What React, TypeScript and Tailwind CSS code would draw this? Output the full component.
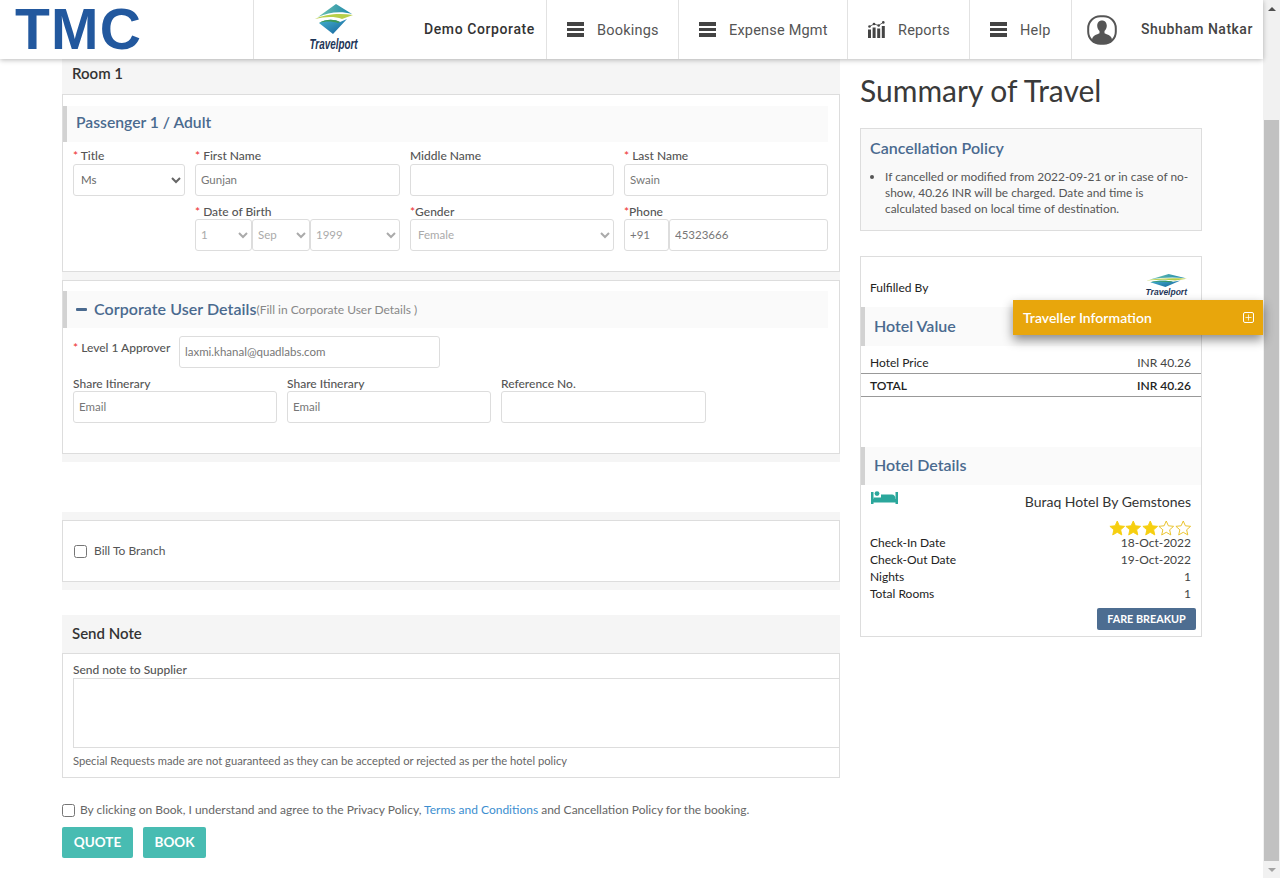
import { Plus } from 'lucide-react';

const labelCls = 'block text-[12px] leading-[14px] text-[#555] font-medium';
const inputCls = 'h-[32px] w-full rounded-[3px] border border-[#ddd] bg-white px-[5px] pb-[0.5px] text-[11.5px] text-[#777] outline-none placeholder:text-[#777]';
const selectCls = 'h-[32px] w-full rounded-[3px] border border-[#ddd] bg-white pb-[1px] text-[11.5px] outline-none';

function Bars() {
  return (
    <span className="flex w-[17px] flex-col gap-[2px]">
      <span className="h-[3.5px] bg-[#444]" />
      <span className="h-[3.5px] bg-[#444]" />
      <span className="h-[3.5px] bg-[#444]" />
    </span>
  );
}

function ChartIcon() {
  return (
    <svg width="17" height="17" viewBox="0 0 17 17" fill="#444">
      <rect x="0" y="8.5" width="3" height="8.5" />
      <rect x="4.6" y="6.5" width="3" height="10.5" />
      <rect x="9.2" y="7.5" width="3" height="9.5" />
      <rect x="13.8" y="5" width="3" height="12" />
      <polyline points="1.5,5.5 6,3 10.7,4.5 15.3,1.2" fill="none" stroke="#444" strokeWidth="0.8" />
      <circle cx="1.5" cy="5.5" r="1.3" />
      <circle cx="6" cy="3" r="1.3" />
      <circle cx="10.7" cy="4.5" r="1.3" />
      <circle cx="15.3" cy="1.4" r="1.3" />
    </svg>
  );
}

function UserIcon() {
  return (
    <svg width="30" height="30" viewBox="0 0 30 30">
      <rect x="1.2" y="1.2" width="27.6" height="27.6" rx="12" fill="#fff" stroke="#555" strokeWidth="2" />
      <path d="M15 5.5c-3 0-4.8 2.2-4.8 5.3 0 2.2 1 4.2 2.3 5.2v2.3c-2.8 1.2-6 2.3-7 4.4-.5 1-.5 2.5-.3 3.5 1.2 1.3 2.6 1.8 4 1.8h11.6c1.4 0 2.8-.5 4-1.8.2-1 .2-2.5-.3-3.5-1-2.1-4.2-3.2-7-4.4V16c1.3-1 2.3-3 2.3-5.2 0-3.1-1.8-5.3-4.8-5.3z" fill="#555" />
    </svg>
  );
}

function TravelportMark({ w, h, id }: { w: number; h: number; id: string }) {
  return (
    <svg width={w} height={h} viewBox="0 0 38 30" preserveAspectRatio="none">
      <defs>
        <linearGradient id={id + 'a'} x1="0" y1="0" x2="1" y2="0">
          <stop offset="0" stopColor="#6fc4ae" />
          <stop offset="1" stopColor="#1b86ad" />
        </linearGradient>
        <linearGradient id={id + 'b'} x1="0" y1="0" x2="1" y2="1">
          <stop offset="0" stopColor="#45b3cf" />
          <stop offset="1" stopColor="#14609a" />
        </linearGradient>
      </defs>
      <path d="M21 0 37 10C26 7 14 8 3 13z" fill={'url(#' + id + 'a)'} />
      <path d="M0 15C10 10 25 9 38 11L27 15C19 12 9 13 0 15z" fill="#b7cf4a" />
      <path d="M4 19C11 15 19 15 25 18L32 15 18 30z" fill={'url(#' + id + 'b)'} />
      <path d="M4 19C11 15 19 15 25 18L23 19C17 17 10 17 4 19z" fill="#3f9a55" />
    </svg>
  );
}

function NavItem({ icon, label, width }: { icon: React.ReactNode; label: string; width: string }) {
  return (
    <div className={`flex h-full items-center gap-[13px] border-l border-[#e2e2e2] pl-[20px] ${width}`}>
      {icon}
      <span className="pt-[2px] font-['Roboto',sans-serif] text-[14.5px] tracking-[0.2px] text-[#555]">{label}</span>
    </div>
  );
}

function Header() {
  return (
    <header className="relative z-10 flex h-[59px] items-center bg-white shadow-[0_1px_5px_rgba(0,0,0,0.28)]">
      <div className="w-[253px] pl-[15px] font-['Liberation_Sans',sans-serif] text-[57px] leading-[57px] font-bold tracking-[1.2px] text-[#22589e]">
        TMC
      </div>
      <div className="flex h-full w-[293px] items-center border-l border-[#e2e2e2]">
        <div className="flex w-[160px] flex-col items-center self-start pt-[4px]">
          <TravelportMark w={38} h={30} id="top" />
          <span className="mt-[1px] font-['Liberation_Sans',sans-serif] text-[15px] leading-[17px] font-bold text-[#1d3557] italic [transform:scaleX(0.66)]">
            Travelport
          </span>
        </div>
        <span className="ml-[10px] font-['Roboto',sans-serif] text-[14px] font-medium tracking-[0.6px] text-[#333]">Demo Corporate</span>
      </div>
      <NavItem icon={<Bars />} label="Bookings" width="w-[132px]" />
      <NavItem icon={<Bars />} label="Expense Mgmt" width="w-[169px]" />
      <NavItem icon={<ChartIcon />} label="Reports" width="w-[122px]" />
      <NavItem icon={<Bars />} label="Help" width="w-[102px]" />
      <div className="flex h-full flex-1 items-center border-l border-[#e2e2e2] pl-[15px]">
        <UserIcon />
        <span className="ml-[24px] font-['Roboto',sans-serif] text-[14px] font-medium tracking-[0.5px] whitespace-nowrap text-[#444]">Shubham Natkar</span>
      </div>
    </header>
  );
}

function Req({ children, cls = '' }: { children: React.ReactNode; cls?: string }) {
  return (
    <label className={`${labelCls} ${cls}`}>
      <span className="text-[#e33]">*</span> {children}
    </label>
  );
}

function SectionBand({ children, cls = 'mr-[11px] h-[36px]' }: { children: React.ReactNode; cls?: string }) {
  return (
    <div className={`flex items-center border-l-[4px] border-[#d2d2d2] bg-[#fafafa] pl-[9px] font-semibold text-[#4a6a8f] ${cls}`}>
      {children}
    </div>
  );
}

function Field({ label, req, value, placeholder, cls = '' }: { label: string; req?: boolean; value?: string; placeholder?: string; cls?: string }) {
  return (
    <div>
      {req ? <Req cls={cls}>{label}</Req> : <label className={`${labelCls} ${cls}`}>{label}</label>}
      <input className={inputCls} defaultValue={value} placeholder={placeholder} readOnly />
    </div>
  );
}

function Gray({ h }: { h: string }) {
  return <div className={`bg-[#f5f5f5] ${h}`} />;
}

function PassengerBox() {
  return (
    <div className="h-[178px] border border-[#ddd] bg-white pt-[11px]">
      <SectionBand><span className="pb-[2px] text-[15.7px]">Passenger 1 / Adult</span></SectionBand>
      <div className="mt-[7px] grid grid-cols-[112px_205px_204px_204px] gap-x-[10px] gap-y-[9px] pl-[10px]">
        <div>
          <Req cls="pb-[1px]">Title</Req>
          <select className={`${selectCls} px-[3px] text-[#666]`} defaultValue="Ms">
            <option>Ms</option>
          </select>
        </div>
        <Field label="First Name" req value="Gunjan" cls="pb-[1px]" />
        <Field label="Middle Name" cls="pb-[1px]" />
        <Field label="Last Name" req value="Swain" cls="pb-[1px]" />
        <div />
        <div>
          <Req>Date of Birth</Req>
          <div className="grid grid-cols-[57px_58px_90px]">
            <select className={`${selectCls} px-[1px] text-[#aaa]`} disabled><option>1</option></select>
            <select className={`${selectCls} px-[1px] text-[#aaa]`} disabled><option>Sep</option></select>
            <select className={`${selectCls} px-[1px] text-[#aaa]`} disabled><option>1999</option></select>
          </div>
        </div>
        <div>
          <label className={labelCls}><span className="text-[#e33]">*</span>Gender</label>
          <select className={`${selectCls} px-[3px] text-[#aaa]`} disabled><option>Female</option></select>
        </div>
        <div>
          <label className={labelCls}><span className="text-[#e33]">*</span>Phone</label>
          <div className="grid grid-cols-[45px_159px]">
            <input className={inputCls} defaultValue="+91" readOnly />
            <input className={`${inputCls} text-[#666]`} defaultValue="45323666" readOnly />
          </div>
        </div>
      </div>
    </div>
  );
}

function CorporateBox() {
  return (
    <div className="h-[174px] border border-[#ddd] bg-white pt-[10px]">
      <SectionBand cls="mr-[11px] h-[37px]">
        <span className="mr-[7px] h-[3px] w-[11px] rounded-[1px] bg-[#4a6a8f]" />
        <span className="pb-[1px] text-[16px] tracking-[0.05px]">Corporate User Details</span>
        <span className="text-[12px] font-normal text-[#888]">(Fill in Corporate User Details )</span>
      </SectionBand>
      <div className="mt-[8px] flex items-center pl-[10px]">
        <span className="w-[106px] pb-[8px] whitespace-nowrap"><Req>Level 1 Approver</Req></span>
        <div className="w-[261px]">
          <input className={`${inputCls} px-[3px]`} defaultValue="laxmi.khanal@quadlabs.com" readOnly />
        </div>
      </div>
      <div className="mt-[9px] grid grid-cols-[204px_204px_205px] gap-x-[10px] pl-[10px]">
        <Field label="Share Itinerary" placeholder="Email" />
        <Field label="Share Itinerary" placeholder="Email" />
        <Field label="Reference No." />
      </div>
    </div>
  );
}

function LeftColumn() {
  return (
    <div className="w-[778px]">
      <div className="flex h-[35px] items-center bg-[#f5f5f5] pb-[6px] pl-[10px] text-[15px] font-semibold text-[#333]">Room 1</div>
      <PassengerBox />
      <Gray h="h-[8px]" />
      <CorporateBox />
      <Gray h="h-[8px]" />
      <div className="h-[50px]" />
      <Gray h="h-[8px]" />
      <div className="flex h-[62px] items-center gap-[7px] border border-[#ddd] bg-white pl-[11px]">
        <input type="checkbox" className="size-[13px]" />
        <span className="text-[12px] text-[#555]">Bill To Branch</span>
      </div>
      <Gray h="h-[8px]" />
      <div className="h-[25px]" />
      <div className="flex h-[38px] items-center bg-[#f5f5f5] pb-[1px] pl-[10px] text-[15px] font-semibold text-[#333]">Send Note</div>
      <div className="h-[125px] border border-[#ddd] bg-white pt-[9px]">
        <label className={`${labelCls} pl-[10px]`}>Send note to Supplier</label>
        <textarea className="mt-[1px] ml-[10px] block h-[70px] w-[767px] resize-none border border-[#ddd] outline-none" readOnly />
        <p className="mt-[6px] pl-[10px] text-[11.2px] leading-[14px] text-[#666]">
          Special Requests made are not guaranteed as they can be accepted or rejected as per the hotel policy
        </p>
      </div>
      <div className="mt-[23px] flex items-center gap-[5px]">
        <input type="checkbox" className="size-[13px]" />
        <span className="text-[12px] text-[#666]">
          By clicking on Book, I understand and agree to the Privacy Policy, <a className="text-[#3b8ed0]">Terms and Conditions</a> and Cancellation Policy for the booking.
        </span>
      </div>
      <div className="mt-[8px] flex gap-[10px]">
        <button className="h-[31px] w-[71px] rounded-[2px] bg-[#48bcb2] pb-[1px] text-[13.5px] font-bold text-white">QUOTE</button>
        <button className="h-[31px] w-[63px] rounded-[2px] bg-[#48bcb2] pb-[1px] text-[13.5px] font-bold text-white">BOOK</button>
      </div>
    </div>
  );
}

function Row({ l, r, strong }: { l: string; r: string; strong?: boolean }) {
  return (
    <div className="flex items-center justify-between pr-[10px] pl-[9px] text-[12px] leading-[17px] text-[#222]">
      <span className={strong ? 'font-semibold' : ''}>{l}</span>
      <span className={strong ? 'font-semibold' : 'text-[#444]'}>{r}</span>
    </div>
  );
}

function Star({ filled }: { filled: boolean }) {
  return (
    <svg width="16.5" height="16" viewBox="0 0 24 24" fill={filled ? '#f6cf10' : 'none'} stroke={filled ? '#f6cf10' : '#e8c020'} strokeWidth="1.4">
      <path d="M12 1.5l3.2 7.2 7.8.8-5.9 5.2 1.7 7.7L12 18.4l-6.8 4 1.7-7.7L1 9.5l7.8-.8z" />
    </svg>
  );
}

function BedIcon() {
  return (
    <svg width="27" height="13" viewBox="0 0 27 13" fill="#2ba79c">
      <rect x="0" y="1" width="2.5" height="12" />
      <rect x="24.5" y="1" width="2.5" height="12" />
      <rect x="0" y="8" width="27" height="3.5" />
      <circle cx="6" cy="2.6" r="2.4" />
      <path d="M10 3.5h11c2 0 3.5 1.5 3.5 4.5H2.5V6.5H10z" />
    </svg>
  );
}

function RightColumn() {
  return (
    <div className="w-[342px]">
      <h1 className="mt-[12px] h-[38px] text-[30px] leading-[38px] font-normal text-[#3a3a3a]">Summary of Travel</h1>
      <div className="mt-[19px] h-[103px] border border-[#ddd] bg-[#f9f9f9] pt-[8px] pr-[8px] pl-[9px]">
        <h3 className="text-[16px] leading-[22px] font-semibold text-[#4a6a8f]">Cancellation Policy</h3>
        <ul className="mt-[10px] list-disc pl-[15px] text-[11.9px] leading-[16px] text-[#555]">
          <li>If cancelled or modified from 2022-09-21 or in case of no-show, 40.26 INR will be charged. Date and time is calculated based on local time of destination.</li>
        </ul>
      </div>
      <div className="mt-[25px] h-[381px] border border-[#ddd] bg-white">
        <div className="flex h-[50px] items-end justify-between pr-[14px] pb-[10px] pl-[9px] text-[12px] text-[#222]">
          <span className="pb-[2px] leading-[14px]">Fulfilled By</span>
          <div className="flex flex-col items-center">
            <TravelportMark w={41} h={13} id="side" />
            <span className="font-['Liberation_Sans',sans-serif] text-[8.5px] leading-[10px] font-bold text-[#1d3557] italic">Travelport</span>
          </div>
        </div>
        <SectionBand cls="h-[39px]"><span className="pb-[2px] text-[16px]">Hotel Value</span></SectionBand>
        <div className="mt-[8px]"><Row l="Hotel Price" r="INR 40.26" /></div>
        <div className="mt-[2px] border-y border-[#999] pt-[3px] pb-[2px]"><Row l="TOTAL" r="INR 40.26" strong /></div>
        <div className="mt-[50px]"><SectionBand cls="h-[38px]"><span className="pb-[2px] text-[16px]">Hotel Details</span></SectionBand></div>
        <div className="flex items-start justify-between pt-[6px] pr-[10px] pl-[10px]">
          <BedIcon />
          <span className="pt-[2px] text-[14px] leading-[18px] text-[#333]">Buraq Hotel By Gemstones</span>
        </div>
        <div className="mt-[9px] -mb-[2px] flex justify-end pr-[10px]">
          {[true, true, true, false, false].map((f, i) => <Star key={i} filled={f} />)}
        </div>
        <Row l="Check-In Date" r="18-Oct-2022" />
        <Row l="Check-Out Date" r="19-Oct-2022" />
        <Row l="Nights" r="1" />
        <Row l="Total Rooms" r="1" />
        <div className="mt-[6px] flex justify-end pr-[5px]">
          <button className="h-[22px] w-[99px] rounded-[2px] bg-[#4d6d91] text-[10.8px] font-bold text-white">FARE BREAKUP</button>
        </div>
      </div>
    </div>
  );
}

function Scrollbar() {
  return (
    <div className="flex h-full w-[17px] flex-col items-center bg-[#f1f1f1]">
      <div className="flex h-[17px] items-center justify-center">
        <svg width="8" height="4" viewBox="0 0 8 4" fill="#505050"><path d="M4 0l4 4H0z" /></svg>
      </div>
      <div className="h-[103px]" />
      <div className="h-[741px] w-[15px] bg-[#c1c1c1]" />
      <div className="flex h-[17px] items-center justify-center">
        <svg width="8" height="4" viewBox="0 0 8 4" fill="#a3a3a3"><path d="M0 0h8L4 4z" /></svg>
      </div>
    </div>
  );
}

export default function App() {
  return (
    <div className="relative flex h-[878px] overflow-hidden bg-white font-['Lato',sans-serif]">
      <div className="flex-1">
        <Header />
        <main className="flex gap-[20px] pl-[62px]">
          <LeftColumn />
          <RightColumn />
        </main>
      </div>
      <Scrollbar />
      <div className="absolute top-[300px] left-[1013px] z-20 flex h-[35px] w-[250px] items-center justify-between bg-[#e8a60c] pr-[9px] pb-[1px] pl-[10px] text-[14px] font-semibold text-white shadow-[0_5px_10px_rgba(0,0,0,0.45)]">
        <span>Traveller Information</span>
        <span className="flex size-[11px] items-center justify-center rounded-[2px] border border-white">
          <Plus size={9} strokeWidth={2} />
        </span>
      </div>
    </div>
  );
}
